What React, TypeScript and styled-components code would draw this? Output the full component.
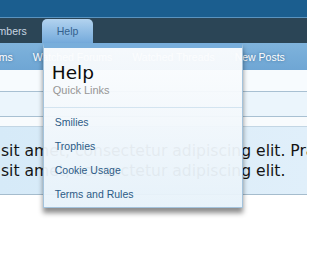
import React from "react";
import styled, { createGlobalStyle } from "styled-components";

const Global = createGlobalStyle`
  html, body { margin: 0; padding: 0; background: #ffffff; }
  body { font-family: "Liberation Sans", Arial, sans-serif; overflow: hidden; }
`;

const Page = styled.div`
  width: 307px;
  height: 253px;
  overflow: hidden;
  background: #ffffff;
`;

const Header = styled.div`
  height: 17px;
  background: #1b5e8f;
  border-bottom: 1px solid #5a93bf;
`;

const NavBar = styled.div`
  position: relative;
  z-index: 10;
  height: 25px;
  background: #2b4556;
  display: flex;
  align-items: flex-end;
`;

const NavTabs = styled.div`
  display: flex;
  align-items: flex-end;
  margin-left: -32px;
`;

const NavTab = styled.div<{ $selected?: boolean }>`
  position: relative;
  height: 24px;
  padding: 0 15px;
  display: flex;
  align-items: center;
  font-size: 10.5px;
  white-space: nowrap;
  border-radius: 5px 5px 0 0;
  color: ${(p) => (p.$selected ? "#33618e" : "#c8d6e2")};
  background: ${(p) =>
    p.$selected ? "linear-gradient(to bottom, #b3d3ef 0%, #95c0e6 45%, #74aadb 100%)" : "transparent"};
`;

const Menu = styled.div`
  position: absolute;
  left: 1px;
  top: 100%;
  width: 200px;
  box-sizing: border-box;
  border-top: 5px solid #78aedb;
  border-left: 1px solid #a4c3dc;
  border-right: 1px solid #a4c3dc;
  border-bottom: 1px solid #a4c3dc;
  background: linear-gradient(to bottom, rgba(252, 253, 254, 0.95) 0%, rgba(243, 248, 252, 0.95) 45%, rgba(231, 242, 250, 0.95) 100%);
  box-shadow: 0 5px 5px rgba(0, 0, 0, 0.45);
`;

const MenuHeader = styled.div`
  padding: 14px 9px 10px;
  border-bottom: 1px solid #d3e4f0;
`;

const MenuTitle = styled.div`
  font-family: "DejaVu Sans", sans-serif;
  font-size: 18.5px;
  line-height: 22px;
  color: #0c0c0c;
  margin-left: -1px;
`;

const MenuSubtitle = styled.div`
  font-size: 11px;
  line-height: 13px;
  color: #969696;
`;

const MenuList = styled.ul`
  list-style: none;
  margin: 0;
  padding: 2px 0 1px;
`;

const MenuItem = styled.li`
  height: 24px;
  padding: 0 11px;
  display: flex;
  align-items: center;
  font-size: 10.5px;
  color: #2c5b86;
  white-space: nowrap;
`;

const SubNav = styled.div`
  height: 27px;
  background: linear-gradient(to bottom, #7fb3dc 0%, #76acd8 50%, #6fa6d4 100%);
  display: flex;
  align-items: center;
`;

const SubNavLinks = styled.div`
  display: flex;
  margin-left: -69px;
`;

const SubNavLink = styled.div`
  padding: 0 10px;
  font-size: 10.5px;
  color: #ffffff;
  white-space: nowrap;
  text-shadow: 0 0 3px rgba(20, 60, 100, 0.55);
`;

const Breadcrumb = styled.div`
  height: 21px;
  background: #f7fbfe;
  border-bottom: 1px solid #a8c0d2;
`;

const Band = styled.div`
  height: 24px;
  background: #ebf5fc;
  border-bottom: 1px solid #a8c0d2;
`;

const Spacer = styled.div`
  height: 9px;
  background: #f8fbfd;
  border-bottom: 1px solid #c3d6e4;
`;

const MessageBox = styled.div`
  padding: 14px 0 13px 1px;
  background: linear-gradient(to right, #d6eaf8 0%, #e0effa 100%);
  border-bottom: 1px solid #a5bccd;
  overflow: hidden;
`;

const MessageLine = styled.div`
  font-family: "DejaVu Sans", sans-serif;
  font-size: 15.6px;
  line-height: 20px;
  color: #141414;
  white-space: nowrap;
`;

export default function App() {
  return (
    <Page>
      <Global />
      <Header />
      <NavBar>
        <NavTabs>
          <NavTab>Members</NavTab>
          <NavTab $selected>
            Help
            <Menu>
              <MenuHeader>
                <MenuTitle>Help</MenuTitle>
                <MenuSubtitle>Quick Links</MenuSubtitle>
              </MenuHeader>
              <MenuList>
                <MenuItem>Smilies</MenuItem>
                <MenuItem>Trophies</MenuItem>
                <MenuItem>Cookie Usage</MenuItem>
                <MenuItem>Terms and Rules</MenuItem>
              </MenuList>
            </Menu>
          </NavTab>
        </NavTabs>
      </NavBar>
      <SubNav>
        <SubNavLinks>
          <SubNavLink>Search Forums</SubNavLink>
          <SubNavLink>Watched Forums</SubNavLink>
          <SubNavLink>Watched Threads</SubNavLink>
          <SubNavLink>New Posts</SubNavLink>
        </SubNavLinks>
      </SubNav>
      <Breadcrumb />
      <Band />
      <Spacer />
      <MessageBox>
        <MessageLine>sit amet, consectetur adipiscing elit. Praesent</MessageLine>
        <MessageLine>sit amet, consectetur adipiscing elit.</MessageLine>
      </MessageBox>
    </Page>
  );
}
